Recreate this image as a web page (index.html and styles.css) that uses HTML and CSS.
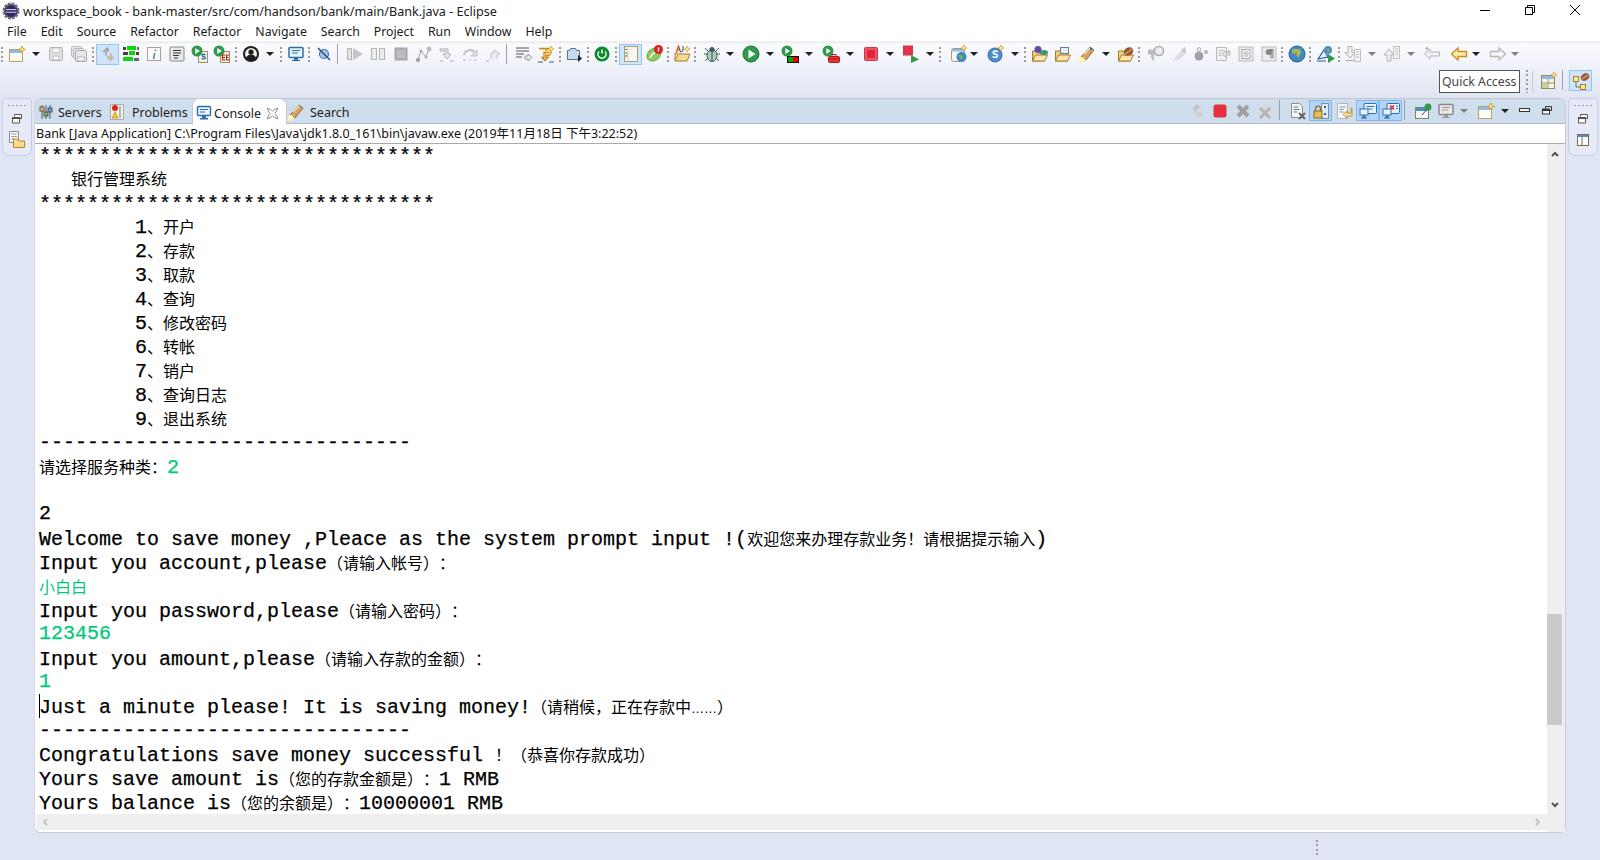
FILE: index.html
```html
<!DOCTYPE html>
<html lang="en">
<head>
<meta charset="utf-8">
<title>workspace_book - Eclipse</title>
<link rel="stylesheet" href="styles.css">
</head>
<body>
<header class="titlebar">
  <svg class="appicon" viewBox="0 0 18 18"><circle cx="9" cy="9" r="7" fill="#2f2a5e" stroke="#6b6880" stroke-width="3" stroke-dasharray="2.5 1.2"/><circle cx="9" cy="9" r="5.5" fill="#2f2a5e"/><path d="M4 7.6h10M3.8 10.2h10.4" stroke="#d9d6ea" stroke-width="1"/></svg>
  <span class="apptitle">workspace_book - bank-master/src/com/handson/bank/main/Bank.java - Eclipse</span>
  <div class="winctl">
    <svg viewBox="0 0 12 12"><path d="M1 6.5h10" stroke="#000"/></svg>
    <svg viewBox="0 0 12 12"><path d="M1.5 3.5h7v7h-7zM3.5 3.500v-2h7v7h-2" fill="none" stroke="#000"/></svg>
    <svg viewBox="0 0 12 12"><path d="M1 1l10 10M11 1L1 11" stroke="#000"/></svg>
  </div>
</header>
<nav class="menubar">
  <span>File</span><span>Edit</span><span>Source</span><span>Refactor</span><span>Refactor</span><span>Navigate</span><span>Search</span><span>Project</span><span>Run</span><span>Window</span><span>Help</span>
</nav>
<section class="toolarea">
  <div class="row1">
    <span class="g"></span>
    <span class="t x1"><svg viewBox="0 0 18 18"><rect x="1.500" y="4.500" width="13" height="12" fill="#fffdf0" stroke="#b8a070"/><rect x="2" y="5" width="12" height="3" fill="#8ebbe8"/><path d="M14 1l1 2.500 2.500 1-2.500 1-1 2.500-1-2.500-2.500-1 2.500-1z" fill="#ffe680" stroke="#c8961e" stroke-width=".8"/></svg></span>
    <span class="a"></span>
    <span class="t"><svg viewBox="0 0 18 18"><rect x="2.500" y="2.500" width="13" height="13" rx="1" fill="#e6e6e6" stroke="#b4b4b4"/><rect x="5" y="3" width="8" height="5" fill="#f4f4f4" stroke="#bbb" stroke-width=".8"/><rect x="6" y="11" width="6" height="4" fill="#fff" stroke="#aaa" stroke-width=".8"/></svg></span>
    <span class="t"><svg viewBox="0 0 18 18"><rect x="1.500" y="1.500" width="10" height="10" rx="1" fill="#e8e8e8" stroke="#bbb"/><rect x="3.500" y="3.500" width="10" height="10" rx="1" fill="#e8e8e8" stroke="#b4b4b4"/><rect x="5.500" y="5.500" width="11" height="11" rx="1" fill="#e6e6e6" stroke="#aaa"/><rect x="8" y="12" width="6" height="4" fill="#fff" stroke="#aaa" stroke-width=".8"/></svg></span>
    <span class="g x1"></span>
    <span class="t on x1"><svg viewBox="0 0 18 18"><path d="M8 2L3 7l3 .5C6 10 7 11 8 11.500V8.500L7.500 7 10 6.500V3.500z" fill="#a8a8a8"/><path d="M11 6.500V9.500L10.500 11 8 11.500v3l2-.5 1 3 5-5-3-.5c0-2.500-1-3.500-2-4z" fill="#c8b9a0"/></svg></span>
    <span class="t"><svg viewBox="0 0 18 18"><rect x="1" y="2" width="3" height="3" fill="#444"/><rect x="5" y="1" width="9" height="4" fill="#0bd70b"/><rect x="15" y="2" width="2" height="3" fill="#666"/><rect x="1" y="7" width="5" height="3" fill="#444"/><rect x="7" y="6" width="6" height="4" fill="#0bd70b"/><rect x="14" y="7" width="3" height="3" fill="#444"/><rect x="1" y="12" width="10" height="4" fill="#0bd70b"/><rect x="12" y="13" width="5" height="3" fill="#666"/></svg></span>
    <span class="t"><svg viewBox="0 0 18 18"><rect x="2.500" y="2.500" width="13" height="13" fill="#fbfaf2" stroke="#a8a291"/><path d="M10.500 4.500v1.500M9.800 8l-1.300 6" stroke="#4a8fd6" stroke-width="1.600" fill="none"/></svg></span>
    <span class="t"><svg viewBox="0 0 18 18"><rect x="2" y="2" width="14" height="14" rx="1" fill="#e9e9e9" stroke="#8a8a8a"/><path d="M5 5.500h8M5 8h8M5 10.500h6M6 13h4" stroke="#333"/></svg></span>
    <span class="t"><svg viewBox="0 0 18 18"><rect x="7.500" y="6.500" width="9" height="11" fill="#f6f2e3" stroke="#a78e58"/><circle cx="6" cy="6" r="5.500" fill="#2e9a4d"/><path d="M4.300 3l4.500 3-4.500 3z" fill="#fff"/><path d="M14.500 10c-2-1.500-4-.5-3.200.8s3.600.8 3 2.200-2.700 1-3.500.2" fill="none" stroke="#1f6fb6" stroke-width="1.300"/></svg></span>
    <span class="t n"><svg viewBox="0 0 18 18"><rect x="7.500" y="6.500" width="9" height="11" fill="#f6f2e3" stroke="#a78e58"/><circle cx="6" cy="6" r="5.500" fill="#2e9a4d"/><path d="M4.300 3l4.500 3-4.500 3z" fill="#fff"/><path d="M12.500 10h-3v5h3M9.500 12.500h2.500M16 10h-2.500v5h3M13.500 12.500h2" fill="none" stroke="#b81c1c"/></svg></span>
    <span class="g x2"></span>
    <span class="t x1"><svg viewBox="0 0 18 18"><circle cx="9" cy="9" r="8" fill="#1d1d1d"/><circle cx="9" cy="9" r="6" fill="#f0f0f0"/><circle cx="9" cy="7" r="2.600" fill="#1d1d1d"/><path d="M4 13c1-3 3-3.500 5-3.500s4 .5 5 3.500a6 6 0 0 1-10 0z" fill="#1d1d1d"/></svg></span>
    <span class="a"></span>
    <span class="g x1"></span>
    <span class="t x1"><svg viewBox="0 0 18 18"><rect x="2" y="2.500" width="14" height="10" rx="1" fill="#eaf3fb" stroke="#2c6fa8" stroke-width="1.500"/><path d="M5 5.500h8M5 8h6" stroke="#2c6fa8"/><path d="M7 13h4v2h2v1H5v-1h2z" fill="#2c6fa8"/></svg></span>
    <span class="g"></span>
    <span class="t x1"><svg viewBox="0 0 18 18"><circle cx="9" cy="9" r="4.500" fill="#a9c4e2" stroke="#3e75ad" stroke-width="1.200"/><path d="M3 3l12 12" stroke="#1e4f86" stroke-width="1.500"/></svg></span>
    <span class="s"></span>
    <span class="t"><svg viewBox="0 0 18 18"><rect x="1.500" y="3.500" width="4" height="11" fill="#e4e4e4" stroke="#b4b4b4"/><path d="M7 3l10 6-10 6z" fill="#c6c6c6"/></svg></span>
    <span class="t"><svg viewBox="0 0 18 18"><rect x="2.500" y="3.500" width="5" height="11" fill="#ececec" stroke="#b4b4b4"/><rect x="10.500" y="3.500" width="5" height="11" fill="#ececec" stroke="#b4b4b4"/></svg></span>
    <span class="t"><svg viewBox="0 0 18 18"><rect x="3.500" y="3.500" width="11" height="11" fill="#bcbcbc" stroke="#a8a8a8" stroke-width="2"/></svg></span>
    <span class="t"><svg viewBox="0 0 18 18"><path d="M3 15L6 6l5 6 3-9" fill="none" stroke="#a0a0a0"/><circle cx="3" cy="15" r="2" fill="#999"/><circle cx="6" cy="6" r="1.500" fill="#aaa"/><circle cx="11" cy="12" r="1.500" fill="#aaa"/><circle cx="14" cy="4" r="2.500" fill="#bbb"/></svg></span>
    <span class="t"><svg viewBox="0 0 18 18"><path d="M2 4h8v5h3l-4 5-4-5h3V6H2z" fill="#eee" stroke="#b0b0b0"/><path d="M2 16h3M12 16h4" stroke="#b0b0b0"/></svg></span>
    <span class="t"><svg viewBox="0 0 18 18"><path d="M3 10a6 6 0 0 1 11-2" fill="none" stroke="#c4c4c4" stroke-width="2.200"/><path d="M16 5v6h-6z" fill="#e4e4e4" stroke="#c0c0c0"/><path d="M2 15h3M8 15h2M13 15h3" stroke="#b8b8b8"/></svg></span>
    <span class="t"><svg viewBox="0 0 18 18"><path d="M7 14V8h3V5l6 4-3 .5V14" fill="#eee" stroke="#bdbdbd"/><path d="M2 16h3" stroke="#b0b0b0"/></svg></span>
    <span class="s"></span>
    <span class="t"><svg viewBox="0 0 18 18"><path d="M1 3h13M1 6h13M1 9h8M1 12h6" stroke="#8a8a8a" stroke-width="1.300"/><path d="M10 11h3V9l4 3.500-4 3.500v-2h-3z" fill="#eee" stroke="#999"/></svg></span>
    <span class="t"><svg viewBox="0 0 18 18"><path d="M1 3.500h10a4 4 0 0 1 0 7H8v2h2l-3 3-3-3h2v-5h5M8 3.500V6" fill="#f9e3a8" stroke="#c58a16" stroke-width="1.300"/><path d="M13 1l1 2 2 1-2 1-1 2-1-2-2-1 2-1z" fill="#ffe680" stroke="#c8961e" stroke-width=".6"/><path d="M0 17h5M11 17h5" stroke="#2e5f99"/></svg></span>
    <span class="g"></span>
    <span class="t x1"><svg viewBox="0 0 18 18"><path d="M1.500 5.500h2l1-2h5l1 2h3v9h-12z" fill="#c6d9ee" stroke="#5a7388"/><path d="M12 10l4 3.500-4 3.500z" fill="#222"/></svg></span>
    <span class="g"></span>
    <span class="t"><svg viewBox="0 0 18 18"><circle cx="9" cy="9" r="7.500" fill="#0a8a2c"/><path d="M9 4.500v4" stroke="#fff" stroke-width="1.500"/><path d="M6 6.500a4 4 0 1 0 6 0" fill="none" stroke="#fff" stroke-width="1.500"/></svg></span>
    <span class="g x1"></span>
    <span class="t on x1"><svg viewBox="0 0 18 18"><rect x="2.500" y="1.500" width="13" height="15" fill="#f8f6ea" stroke="#a59a7c"/><path d="M6 1.500v15" stroke="#bbb" stroke-dasharray="1 1"/><path d="M3.500 4.500h1.500M3.500 8h2M3.500 11h2" stroke="#444"/></svg></span>
    <span class="t x1"><svg viewBox="0 0 18 18"><path d="M1 12C1 5 7 2 15 3c1 8-3 13-9 13-3 0-5-2-5-4z" fill="#8ccb59" stroke="#6aa93f"/><path d="M4 13c2-5 5-6 8-6" fill="none" stroke="#fff" stroke-width="1.500"/><circle cx="12.500" cy="4.500" r="4.500" fill="#e02020"/><path d="M12.500 2.500v4" stroke="#fff" stroke-width="1.400"/></svg></span>
    <span class="g"></span>
    <span class="t"><svg viewBox="0 0 18 18"><path d="M2 16l3-7h12l-3 7z" fill="#f7d993" stroke="#a87a2a"/><path d="M2 16V8h3" fill="#eed8a8" stroke="#a87a2a"/><path d="M3.500 7l2-6 2 6M4.300 5h2.400" fill="none" stroke="#d2491e" stroke-width="1.200"/><path d="M10 1v4a2 2 0 0 1-3 1.500" fill="none" stroke="#2c6fb6" stroke-width="1.200"/><path d="M14 1l1 2 2 1-2 1-1 2-1-2-2-1 2-1z" fill="#ffe680" stroke="#c8961e" stroke-width=".6"/></svg></span>
    <span class="g"></span>
    <span class="t x3"><svg viewBox="0 0 18 18"><path d="M2 3l3 3M16 3l-3 3M1 9h3M17 9h-3M2 16l3-3M16 16l-3-3" stroke="#3c5d57"/><ellipse cx="9" cy="10.500" rx="5" ry="6" fill="#a5cdb9" stroke="#3c5d57"/><circle cx="9" cy="4.500" r="2.500" fill="#3c5d57"/><path d="M9 6v10" stroke="#3c5d57"/></svg></span>
    <span class="a a14"></span>
    <span class="t x2"><svg viewBox="0 0 18 18"><circle cx="9" cy="9" r="8" fill="#2e9a4d" stroke="#1f7a38"/><path d="M6.500 4.500l7 4.500-7 4.500z" fill="#fff"/></svg></span>
    <span class="a"></span>
    <span class="t"><svg viewBox="0 0 18 18"><circle cx="6" cy="6" r="5.500" fill="#2e9a4d"/><path d="M4.300 3l4.500 3-4.500 3z" fill="#fff"/><rect x="6.500" y="11.500" width="11" height="6" fill="#e00" stroke="#111"/><rect x="7" y="12" width="5" height="5" fill="#0a0"/></svg></span>
    <span class="a"></span>
    <span class="t x2"><svg viewBox="0 0 18 18"><circle cx="6" cy="6" r="5.500" fill="#2e9a4d"/><path d="M4.300 3l4.500 3-4.500 3z" fill="#fff"/><rect x="6.500" y="11.500" width="11" height="6" rx="1" fill="#e33" stroke="#b01a1a"/><path d="M10 11.500v-2h4v2M6.500 14h11" fill="none" stroke="#b01a1a"/></svg></span>
    <span class="a"></span>
    <span class="t x1"><svg viewBox="0 0 18 18"><rect x="2.500" y="2.500" width="13" height="13" rx="1" fill="#f0566a" stroke="#c93a48"/><rect x="5" y="5" width="8" height="8" fill="#e3243a"/></svg></span>
    <span class="a"></span>
    <span class="t x1"><svg viewBox="0 0 18 18"><rect x="1.500" y="1" width="9" height="9" fill="#e3344a" stroke="#c93a48"/><path d="M9 10l8 4.500L9 18z" fill="#2e9a4d"/></svg></span>
    <span class="a"></span>
    <span class="g"></span>
    <span class="t x5"><svg viewBox="0 0 18 18"><rect x="1.500" y="3.500" width="13" height="13" rx="2" fill="#f4f6fb" stroke="#a99a75"/><rect x="2" y="4" width="12" height="2.500" fill="#8ebbe8"/><circle cx="11.500" cy="12" r="5" fill="#3a86c8"/><path d="M8 10c2-1 3 1 4 0l1 3-2 2z" fill="#7fb34a"/><path d="M14 0l1 2 2 1-2 1-1 2-1-2-2-1 2-1z" fill="#ffe680" stroke="#c8961e" stroke-width=".6"/></svg></span>
    <span class="a a8"></span>
    <span class="t x6"><svg viewBox="0 0 18 18"><circle cx="8" cy="10" r="7" fill="#4d8dc9" stroke="#386b9b"/><path d="M11 7c-2-1.600-5-1-4.800.8.200 1.600 4.300 1 4.300 3s-3.400 2-5 .7" fill="none" stroke="#fff" stroke-width="1.600"/><path d="M14 0l1 2 2 1-2 1-1 2-1-2-2-1 2-1z" fill="#ffe680" stroke="#c8961e" stroke-width=".6"/></svg></span>
    <span class="a"></span>
    <span class="g"></span>
    <span class="t x1"><svg viewBox="0 0 18 18"><path d="M1.500 16V6h5l1 2h6v8z" fill="#f5cf84" stroke="#a87a2a"/><path d="M1.500 16l3-6h12l-3 6z" fill="#fde5ae" stroke="#a87a2a"/><circle cx="7" cy="4.500" r="3.500" fill="#5c4fa8"/><ellipse cx="13" cy="7.500" rx="4" ry="2.500" fill="#3d9a6a"/></svg></span>
    <span class="t"><svg viewBox="0 0 18 18"><path d="M1.500 16V6h5l1 2h6v8z" fill="#f5cf84" stroke="#a87a2a"/><path d="M1.500 16l3-6h12l-3 6z" fill="#fde5ae" stroke="#a87a2a"/><rect x="6.500" y="2.500" width="8" height="6" fill="#e8eef6" stroke="#6b7d92"/></svg></span>
    <span class="t x1"><svg viewBox="0 0 18 18"><path d="M3 12L12 2l4 3-8 10z" fill="#d4a35c" stroke="#8d6a3a"/><path d="M6 9l6-6" stroke="#f6e4be" stroke-width="1.500"/><path d="M3 12l5 3-7 2z" fill="#fff4bd"/><circle cx="3.500" cy="15" r="3" fill="#fff1a8"/><circle cx="13" cy="4" r="1.200" fill="#3d6ea5"/></svg></span>
    <span class="a"></span>
    <span class="t"><svg viewBox="0 0 18 18"><path d="M1.500 16V6h5l1 2h6v8z" fill="#f5cf84" stroke="#a87a2a"/><path d="M1.500 16l3-6h12l-3 6z" fill="#fde5ae" stroke="#a87a2a"/><ellipse cx="11.500" cy="6.500" rx="5" ry="4" transform="rotate(-30 11.500 6.500)" fill="#9b5a2c"/><path d="M8 9c2-1 4-3 7-5" stroke="#e8c9a4" fill="none"/></svg></span>
    <span class="g"></span>
    <span class="t x3"><svg viewBox="0 0 18 18"><path d="M1 4.500h9v5H7v7l-3-4V9.500H1z" fill="#bdbdbd"/><circle cx="12" cy="6" r="4.500" fill="#eee" stroke="#aaa" stroke-width="1.500"/></svg></span>
    <span class="t"><svg viewBox="0 0 18 18"><path d="M2 16L15 2l1 6-7 7-7 1z" fill="#dedede"/><path d="M11 6l4-4 1 6z" fill="#c4c4c4"/></svg></span>
    <span class="t n"><svg viewBox="0 0 18 18"><circle cx="7" cy="11" r="4.500" fill="#a2a2a2"/><circle cx="7" cy="4.500" r="1.800" fill="none" stroke="#aaa"/><circle cx="14" cy="7" r="2" fill="#b4b4b4"/></svg></span>
    <span class="t"><svg viewBox="0 0 18 18"><path d="M2.500 2.500h10v13h-10z" fill="#f2f2f2" stroke="#b8b8b8"/><path d="M4.500 5.500h6M4.500 8h3M4.500 10.500h3" stroke="#bbb"/><path d="M16 6v4H12v2l-4-3 4-3v2h2V6z" fill="#ececec" stroke="#b0b0b0"/></svg></span>
    <span class="t"><svg viewBox="0 0 18 18"><rect x="2" y="2" width="14" height="14" fill="#ececec" stroke="#b8b8b8"/><rect x="5" y="4.500" width="8" height="9" fill="#f8f8f8" stroke="#aaa"/><path d="M6.500 7h5M6.500 9h5M6.500 11h5" stroke="#aaa"/></svg></span>
    <span class="t"><svg viewBox="0 0 18 18"><rect x="2" y="2" width="14" height="14" fill="#ececec" stroke="#b8b8b8"/><path d="M11 4.500v9M13 4.500v9" stroke="#888" stroke-width="1.200"/><path d="M13 4.500H8.500a2.500 2.500 0 0 0 0 5H11" fill="#888" stroke="#888"/></svg></span>
    <span class="g"></span>
    <span class="t x1"><svg viewBox="0 0 18 18"><circle cx="9" cy="9" r="8" fill="#4089c6" stroke="#2e5f87"/><path d="M4 5c3-2 5 0 8-1l1 4-3 5-2-4-4-1z" fill="#9dbf58"/><circle cx="8" cy="8" r="1.500" fill="#d68a1f"/></svg></span>
    <span class="g"></span>
    <span class="t x2"><svg viewBox="0 0 18 18"><path d="M1 14l6-9 4 7z" fill="#e9eff7" stroke="#2b5d9a" stroke-width="1.200"/><circle cx="11" cy="5" r="4" fill="#4d8dc9"/><path d="M9 4c2-1 3 0 4 0l-1 3z" fill="#85b155"/><path d="M0 16h9" stroke="#2b5d9a"/><path d="M11 9l7 4.500-7 4.500z" fill="#2e9a4d"/></svg></span>
    <span class="g"></span>
    <span class="t"><svg viewBox="0 0 18 18"><path d="M4 1.500h4v6h3L6 13 1 7.500h3z" fill="#eee" stroke="#b4b4b4"/><path d="M2 15.500h8" stroke="#aaa"/><rect x="10.500" y="4.500" width="6" height="12" fill="#f4f4f4" stroke="#c0c0c0"/><path d="M12 7h3M12 9.500h3M12 12h3" stroke="#bbb"/></svg></span>
    <span class="a d"></span>
    <span class="t"><svg viewBox="0 0 18 18"><path d="M4 16h4v-6h3L6 4 1 10h3z" fill="#eee" stroke="#b4b4b4"/><rect x="10.500" y="1.500" width="6" height="12" fill="#f4f4f4" stroke="#c0c0c0"/><path d="M12 4h3M12 6.500h3M12 9h3" stroke="#bbb"/></svg></span>
    <span class="a d"></span>
    <span class="t x1"><svg viewBox="0 0 18 18"><path d="M1.500 9L7 4v3h9.500v4H7v3z" fill="#f4f4f4" stroke="#b4b4b4"/><path d="M4 1l.8 1.700 1.700.8-1.700.8L4 6l-.8-1.700-1.700-.8 1.700-.8z" fill="#bbb"/></svg></span>
    <span class="t x4"><svg viewBox="0 0 18 18"><path d="M1.500 9L8 3v3.500h8.500v5H8V15z" fill="#fcebb4" stroke="#c98a16" stroke-width="1.300"/></svg></span>
    <span class="a a12"></span>
    <span class="t x4"><svg viewBox="0 0 18 18"><path d="M16.500 9L10 3v3.500H1.500v5H10V15z" fill="#f6f6f6" stroke="#b8b8b8" stroke-width="1.300"/></svg></span>
    <span class="a a12 d"></span>
  </div>
  <div class="row2">
    <div class="quick">Quick Access</div>
    <span class="g wide"></span>
    <span class="curve"></span>
    <span class="t"><svg viewBox="0 0 18 18"><rect x="1.500" y="3.500" width="13" height="13" fill="#f9f5e4" stroke="#9a8a62"/><rect x="2" y="4" width="12" height="3" fill="#8ebbe8"/><path d="M8 7v9M2 11h12" stroke="#9a8a62"/><rect x="2" y="11.500" width="6" height="4.500" fill="#b6d79a"/><path d="M14 0l1 2 2 1-2 1-1 2-1-2-2-1 2-1z" fill="#ffe680" stroke="#c8961e" stroke-width=".6"/></svg></span>
    <span class="s"></span>
    <span class="t on x1"><svg viewBox="0 0 18 18"><rect x="1.500" y="4.500" width="5" height="5" fill="#fbe79c" stroke="#a8812a"/><rect x="8.500" y="12.500" width="5" height="5" fill="#fbe79c" stroke="#a8812a"/><path d="M4 10v5h4.500" fill="none" stroke="#8a6a2a"/><ellipse cx="13" cy="5" rx="4.500" ry="3.500" transform="rotate(-35 13 5)" fill="#9b5a2c"/><path d="M10 7l6-4" stroke="#e8c9a4"/></svg></span>
  </div>
</section>
<main class="workbench">
  <aside class="trim">
    <span class="trimdots"></span>
    <svg viewBox="0 0 12 12"><path d="M3.500 3.500v-2h7v4h-2M1.500 5h7v5h-7z" fill="#fff" stroke="#555"/><rect x="1" y="4" width="8" height="2" fill="#555"/></svg>
    <svg class="big" viewBox="0 0 18 18"><path d="M1.500 .5h9v11h-9z" fill="#fff" stroke="#8a8a8a"/><path d="M3 3h6M3 5.500h6M3 8h4" stroke="#999"/><path d="M5.500 16.500V8h4l1 2h6v6.500z" fill="#f9d98b" stroke="#b28a2e"/></svg>
  </aside>
  <section class="panel">
    <div class="tabbar">
      <div class="tab tab-servers"><svg viewBox="0 0 16 16"><path d="M4 1v14M8 1v14M12 1v14" stroke="#4d5b67"/><rect x="2" y="3" width="4" height="4" fill="#e6c65a" stroke="#555"/><rect x="6" y="8" width="4" height="4" fill="#7ab45a" stroke="#555"/><rect x="10" y="4" width="4" height="4" fill="#6a9fd0" stroke="#555"/></svg><span>Servers</span></div>
      <div class="tab tab-problems"><svg viewBox="0 0 18 18"><path d="M2.500 1.500h13v15h-13z" fill="#fdf3d6" stroke="#a8a8b0"/><circle cx="7" cy="5" r="3" fill="#e02020"/><path d="M7 9l3 6H4z" fill="#f4c23a" stroke="#a87a1a" stroke-width=".6"/><path d="M12 3v12" stroke="#a8b8cc" stroke-width="2"/></svg><span>Problems</span></div>
      <div class="tab tab-console"><svg viewBox="0 0 16 16"><rect x="1.500" y="1.500" width="13" height="9" rx="1" fill="#eaf3fb" stroke="#2c6fa8" stroke-width="1.400"/><path d="M4 4.500h8M4 7h5" stroke="#2c6fa8"/><path d="M6 11h4v2h2v1.500H4V13h2z" fill="#2c6fa8"/></svg><span>Console</span><svg class="close" viewBox="0 0 12 12"><path d="M1 1l3.500 1.500L6 4l1.500-1.500L11 1 9.500 4.500 8 6l1.500 1.500L11 11 7.500 9.500 6 8 4.500 9.500 1 11l1.500-3.500L4 6 2.500 4.500z" fill="#fff" stroke="#8a8a8a" stroke-width=".9"/></svg></div>
      <div class="tab tab-search"><svg viewBox="0 0 18 18"><path d="M3 12L12 2l4 3-8 10z" fill="#d4a35c" stroke="#8d6a3a"/><path d="M6 9l6-6" stroke="#f6e4be" stroke-width="1.500"/><circle cx="3.500" cy="15" r="3" fill="#fff1a8"/><path d="M3 12l5 3-7 2z" fill="#fff8d4"/></svg><span>Search</span></div>
      <div class="tabtools">
        <span class="t"><svg viewBox="0 0 18 18"><path d="M9 2L4 7l2.500.5C6.500 10 7.500 11 8.500 11.500V8.500L8 7l3-.5V3.500z" fill="#c0c0c0"/><path d="M12 6.500V9.500L11 11l-3 .5v3l2-.5 1 3 5-5-2.500-.5c0-2.500-1-3.500-1.500-5z" fill="#cfcfcf"/></svg></span>
        <span class="t"><svg viewBox="0 0 18 18"><rect x="3" y="3" width="12" height="12" rx="1.500" fill="#e8303f" stroke="#c93a48"/></svg></span>
        <span class="t"><svg viewBox="0 0 18 18"><path d="M4 4l10 10M14 4L4 14" stroke="#a0a0a0" stroke-width="4"/></svg></span>
        <span class="t"><svg viewBox="0 0 18 18"><path d="M6 3l9 9M15 3l-9 9" stroke="#d8d8d8" stroke-width="3"/><path d="M3 6l10 10M13 6L3 16" stroke="#b4b4b4" stroke-width="3"/></svg></span>
        <span class="s tall"></span>
        <span class="t x1"><svg viewBox="0 0 18 18"><path d="M2.500 1.500h8l3 3v11h-11z" fill="#f8f8f8" stroke="#8e8e8e"/><path d="M4.500 5h5M4.500 7.500h6M4.500 10h4" stroke="#4d7cb0"/><path d="M10 11l6 6M16 11l-6 6" stroke="#666" stroke-width="2"/></svg></span>
        <span class="t on strong"><svg viewBox="0 0 18 18"><rect x="9.500" y="1.500" width="7" height="15" fill="#dce9f6" stroke="#7d8ea3"/><path d="M12 5h2M12 12h2" stroke="#3e5f86" stroke-width="2"/><rect x="2" y="9" width="8" height="7" fill="#e7bd4f" stroke="#8d6a1f"/><path d="M3.500 9V6.500a2.500 2.500 0 0 1 5 0V9" fill="none" stroke="#8d6a1f" stroke-width="1.200"/></svg></span>
        <span class="t"><svg viewBox="0 0 18 18"><path d="M2.500 1.500h10v15h-10z" fill="#f6f6f6" stroke="#b4b4b4"/><path d="M4.500 5h6M4.500 7.500h4M4.500 10h4" stroke="#6b93bf"/><path d="M16 6v5h-4v-2l-4 3.500L12 16v-2h5V6z" fill="#f7e2a8" stroke="#c19a3e"/></svg></span>
        <span class="t on strong x1"><svg viewBox="0 0 18 18"><rect x="5" y="1.500" width="12.500" height="10" rx="1" fill="#eaf3fb" stroke="#2c6fa8"/><path d="M7.500 4.500h8M7.500 7h6" stroke="#2c6fa8"/><rect x="1" y="7" width="8" height="6" fill="#eaf3fb" stroke="#2c6fa8"/><path d="M3.500 13.500h3v2h1.500v1h-6v-1h1.500z" fill="#2c6fa8"/></svg></span>
        <span class="t on strong"><svg viewBox="0 0 18 18"><rect x="5" y="1.500" width="12.500" height="10" rx="1" fill="#eaf3fb" stroke="#2c6fa8"/><path d="M8 3.500l4 4M12 3.500l-4 4" stroke="#e02020" stroke-width="1.600"/><path d="M14 4h2M14 6.500h2" stroke="#2c6fa8"/><rect x="1" y="7" width="8" height="6" fill="#eaf3fb" stroke="#2c6fa8"/><path d="M3.500 13.500h3v2h1.500v1h-6v-1h1.500z" fill="#2c6fa8"/></svg></span>
        <span class="s tall"></span>
        <span class="t x1"><svg viewBox="0 0 18 18"><rect x="1.500" y="5.500" width="13" height="11" fill="#f4f7fb" stroke="#7a8a5c"/><rect x="2" y="6" width="12" height="3" fill="#4d8dc9"/><path d="M8 13l7-8" stroke="#444"/><circle cx="14" cy="5" r="3.500" fill="#2e9a4d"/></svg></span>
        <span class="t"><svg viewBox="0 0 18 18"><rect x="2" y="2.500" width="14" height="10" rx="1" fill="#e8e8e8" stroke="#8c8c8c" stroke-width="1.500"/><path d="M5 5.500h8M5 8h6" stroke="#9a9a9a"/><path d="M7 13h4v2h2v1H5v-1h2z" fill="#9a9a9a"/></svg></span>
        <span class="a a14 d"></span>
        <span class="t x3"><svg viewBox="0 0 18 18"><rect x="1.500" y="4.500" width="13" height="12" fill="#fffdf0" stroke="#b8a070"/><rect x="2" y="5" width="12" height="3" fill="#8ebbe8"/><path d="M14 1l1 2.500 2.500 1-2.500 1-1 2.500-1-2.500-2.500-1 2.500-1z" fill="#ffe680" stroke="#c8961e" stroke-width=".8"/></svg></span>
        <span class="a"></span>
        <span class="t"><svg viewBox="0 0 18 18"><rect x="3.500" y="6.500" width="10" height="3" fill="#f4f4f4" stroke="#333"/></svg></span>
        <span class="t n"><svg viewBox="0 0 18 18"><path d="M7.500 6.500v-2h6v4h-2" fill="none" stroke="#333"/><rect x="4.500" y="7" width="7" height="5" fill="#fff" stroke="#333"/><rect x="4" y="7" width="8" height="2" fill="#333"/></svg></span>
      </div>
    </div>
    <div class="desc">Bank [Java Application] C:\Program Files\Java\jdk1.8.0_161\bin\javaw.exe (2019年11月18日 下午3:22:52)</div>
    <div class="consolewrap">
      <div class="consolecol">
        <div class="console">
          <div class="l stars">*********************************</div>
          <div class="l indent"><span class="z">银行管理系统</span></div>
          <div class="l stars">*********************************</div>
          <div class="l">        1<span class="z">、开户</span></div>
          <div class="l">        2<span class="z">、存款</span></div>
          <div class="l">        3<span class="z">、取款</span></div>
          <div class="l">        4<span class="z">、查询</span></div>
          <div class="l">        5<span class="z">、修改密码</span></div>
          <div class="l">        6<span class="z">、转帐</span></div>
          <div class="l">        7<span class="z">、销户</span></div>
          <div class="l">        8<span class="z">、查询日志</span></div>
          <div class="l">        9<span class="z">、退出系统</span></div>
          <div class="l dash">-------------------------------</div>
          <div class="l"><span class="z">请选择服务种类：</span><span class="in">2</span></div>
          <div class="l"></div>
          <div class="l">2</div>
          <div class="l">Welcome to save money ,Pleace as the system prompt input !(<span class="z">欢迎您来办理存款业务！请根据提示输入</span>)</div>
          <div class="l">Input you account,please<span class="z">（请输入帐号）：</span></div>
          <div class="l in"><span class="z">小白白</span></div>
          <div class="l">Input you password,please<span class="z">（请输入密码）：</span></div>
          <div class="l in">123456</div>
          <div class="l">Input you amount,please<span class="z">（请输入存款的金额）：</span></div>
          <div class="l in">1</div>
          <div class="l caret">Just a minute please! It is saving money!<span class="z">（请稍候，正在存款中<span class="el">……</span>）</span></div>
          <div class="l dash">-------------------------------</div>
          <div class="l">Congratulations save money successful <span class="z">！（恭喜你存款成功）</span></div>
          <div class="l">Yours save amount is<span class="z">（您的存款金额是）：</span>1 RMB</div>
          <div class="l">Yours balance is<span class="z">（您的余额是）：</span>10000001 RMB</div>
        </div>
        <div class="hbar">
          <svg viewBox="0 0 8 8"><path d="M6 1L3 4l3 3" fill="none" stroke="#c4c4c4" stroke-width="2"/></svg>
          <svg viewBox="0 0 8 8"><path d="M2 1l3 3-3 3" fill="none" stroke="#c4c4c4" stroke-width="2"/></svg>
        </div>
      </div>
      <div class="vbar">
        <svg viewBox="0 0 8 8"><path d="M1 6l3-3 3 3" fill="none" stroke="#555" stroke-width="2"/></svg>
        <div class="thumb"></div>
        <svg class="down" viewBox="0 0 8 8"><path d="M1 2l3 3 3-3" fill="none" stroke="#555" stroke-width="2"/></svg>
      </div>
    </div>
  </section>
  <aside class="trim">
    <span class="trimdots"></span>
    <svg viewBox="0 0 12 12"><path d="M3.500 3.500v-2h7v4h-2M1.500 5h7v5h-7z" fill="#fff" stroke="#555"/><rect x="1" y="4" width="8" height="2" fill="#555"/></svg>
    <svg class="big" viewBox="0 0 18 18"><rect x="3.500" y="3.500" width="11" height="11" fill="#fff" stroke="#7a6a4a"/><rect x="4" y="4" width="10" height="2" fill="#5a8fc4"/><path d="M8 6v8" stroke="#7a6a4a"/></svg>
  </aside>
</main>
<footer class="statusbar"><span class="g"></span></footer>
</body>
</html>
```

FILE: styles.css
```css
* { box-sizing: border-box; }
html, body { margin: 0; padding: 0; }
body {
  width: 1600px;
  height: 860px;
  overflow: hidden;
  background: #e0e5f4;
  color: #1a1a1a;
  font-family: "Noto Sans", "Noto Sans CJK SC", sans-serif;
  font-size: 12.5px;
  text-spacing-trim: space-all;
  display: flex;
  flex-direction: column;
}
svg { display: block; }

.titlebar {
  height: 22px;
  background: #fff;
  display: flex;
  align-items: center;
  padding-left: 2px;
  flex: none;
}
.appicon { width: 18px; height: 18px; margin-right: 3px; }
.apptitle { font-size: 12.6px; white-space: nowrap; }
.winctl { margin-left: auto; display: flex; gap: 33px; padding-right: 19px; margin-top: -3px; }
.winctl svg { width: 12px; height: 12px; }

.menubar {
  height: 19px;
  background: #fff;
  display: flex;
  align-items: center;
  padding-left: 7px;
  gap: 14px;
  font-size: 12.3px;
  flex: none;
  white-space: nowrap;
}

.toolarea {
  height: 57px;
  flex: none;
  background: linear-gradient(#f0f0f0 0, #f0f0f0 2px, #fafbfe 3px, #e0e5f4 100%);
  padding-top: 2px;
}
.row1 { height: 22px; display: flex; align-items: center; }
.row2 { height: 33px; display: flex; align-items: flex-start; justify-content: flex-end; padding: 5px 8px 0 0; }

.t {
  width: 23px;
  height: 21px;
  flex: none;
  display: flex;
  align-items: center;
  justify-content: center;
  border: 1px solid transparent;
}
.t svg { width: 18px; height: 18px; flex: none; }
.t.n { width: 21px; }
.t.on { background: #cfe5fb; border-color: #93c6f3; }
.t.on.strong { background: #b3d4f6; border-color: #7fb8f2; }

.x1 { margin-left: 1px; }
.x2 { margin-left: 2px; }
.x3 { margin-left: 3px; }
.x4 { margin-left: 4px; }
.x5 { margin-left: 5px; }
.x6 { margin-left: 6px; }

.a { width: 16px; height: 21px; flex: none; display: flex; align-items: center; justify-content: center; }
.a::before {
  content: "";
  border-left: 4px solid transparent;
  border-right: 4px solid transparent;
  border-top: 4px solid #222;
}
.a.d::before { border-top-color: #808080; }
.a8 { width: 8px; }
.a12 { width: 12px; }
.a14 { width: 14px; }

.g { width: 4px; height: 15px; flex: none; display: block; position: relative; }
.g::before {
  content: "";
  display: block;
  width: 2px;
  height: 15px;
  margin-left: 1px;
  background: repeating-linear-gradient(#a39d8f 0, #a39d8f 2px, transparent 2px, transparent 4.4px);
}
.g.wide { margin: 0 3px 0 5px; height: 23px; }
.g.wide::before { height: 23px; }

.s { width: 8px; height: 20px; flex: none; display: block; position: relative; }
.s::before { content: ""; display: block; width: 1px; height: 20px; margin-left: 2px; background: #9aa0a8; }
.s.tall { height: 21px; }

.quick {
  width: 81px;
  height: 23px;
  background: #fff;
  border: 1px solid #555;
  color: #444;
  font-size: 12.3px;
  line-height: 21px;
  padding-left: 2px;
  white-space: nowrap;
  overflow: hidden;
}
.curve { width: 5px; height: 23px; border-left: 1px solid #c6cad6; border-radius: 4px 0 0 4px; flex: none; }

.workbench { height: 735px; flex: none; display: flex; align-items: flex-start; gap: 2px; padding: 0 2px; }
.trim {
  width: 30px;
  height: 58px;
  flex: none;
  display: flex;
  flex-direction: column;
  align-items: center;
  background: #e6eaf7;
  border: 1px solid #c7cce0;
  border-radius: 4px 4px 8px 8px;
  padding-top: 6px;
}
.trimdots { width: 18px; height: 1px; background: repeating-linear-gradient(90deg, #999 0, #999 2px, transparent 2px, transparent 4px); margin-bottom: 7px; }
.trim svg { width: 12px; height: 12px; }
.trim svg.big { width: 18px; height: 18px; margin-top: 6px; }

.panel {
  flex: 1;
  height: 735px;
  min-width: 0;
  display: flex;
  flex-direction: column;
  background: #fff;
  border: 1px solid #c6cad6;
  border-top: 0;
  border-left-color: #d5d9e5;
  border-radius: 6px;
}
.tabbar {
  height: 26px;
  flex: none;
  background: #cfdeec;
  border-top: 1px solid #c4c4c8;
  border-bottom: 1px solid #b5b8c8;
  border-radius: 6px 6px 0 0;
  display: flex;
  align-items: center;
  padding-left: 3px;
  color: #222;
}
.tab { height: 25px; display: flex; align-items: center; flex: none; white-space: nowrap; padding-top: 2px; }
.tab svg { width: 16px; height: 16px; flex: none; }
.tab-servers { width: 70px; gap: 4px; }
.tab-problems { width: 84px; gap: 6px; }
.tab-problems svg { width: 18px; height: 18px; }
.tab-console {
  width: 95px;
  height: 27px;
  margin-top: 1px;
  padding-left: 3px;
  gap: 2px;
  background: #fff;
  border: 1px solid #c6cad6;
  border-bottom: 0;
  border-radius: 7px 7px 0 0;
}
.tab-console .close { width: 13px; height: 13px; margin-left: auto; margin-right: 7px; }
.tab-search { gap: 5px; }
.tab-search svg { width: 18px; height: 18px; }
.tabtools { margin-left: auto; display: flex; align-items: center; padding-right: 8px; margin-top: -1px; }

.desc {
  height: 20px;
  flex: none;
  border-bottom: 1px solid #aaa;
  padding-left: 1px;
  font-size: 12.5px;
  line-height: 20px;
  white-space: nowrap;
  color: #111;
}
.consolewrap { flex: 1; min-height: 0; display: flex; }
.consolecol { flex: 1; min-width: 0; display: flex; flex-direction: column; }
.console { flex: 1; min-height: 0; padding-left: 4px; overflow: hidden; margin-top: -2px; }
.l {
  height: 24px;
  line-height: 24px;
  font-family: "Liberation Mono", "Noto Sans CJK SC", monospace;
  font-size: 20px;
  white-space: pre;
  color: #000;
  -webkit-text-stroke: 0.25px #000;
}
.stars { line-height: 30px; }
.dash { line-height: 26px; }
.z { font-family: "Noto Sans CJK SC", sans-serif; font-size: 16px; -webkit-text-stroke: 0; }
.el { font-family: "Liberation Sans", sans-serif; font-size: 13px; }
.indent { padding-left: 32px; }
.in { color: #00c87d; -webkit-text-stroke-color: #00c87d; }
.caret { position: relative; }
.caret::before { content: ""; position: absolute; left: 0; top: 0; width: 1px; height: 24px; background: #000; }

.hbar {
  height: 16px;
  flex: none;
  margin-bottom: 2px;
  background: #efefef;
  display: flex;
  align-items: center;
  justify-content: space-between;
  padding: 0 5px;
  margin-left: 1px;
}
.hbar svg { width: 8px; height: 8px; }
.vbar {
  width: 18px;
  flex: none;
  background: #efefef;
  display: flex;
  flex-direction: column;
  align-items: stretch;
}
.vbar svg { width: 8px; height: 8px; margin: 6px 0 0 4px; flex: none; }
.vbar svg.down { margin-top: 76px; }
.thumb { width: 15px; height: 111px; background: #cacaca; margin-top: 456px; flex: none; }

.statusbar { flex: 1; padding: 7px 0 0 1315px; }
```
